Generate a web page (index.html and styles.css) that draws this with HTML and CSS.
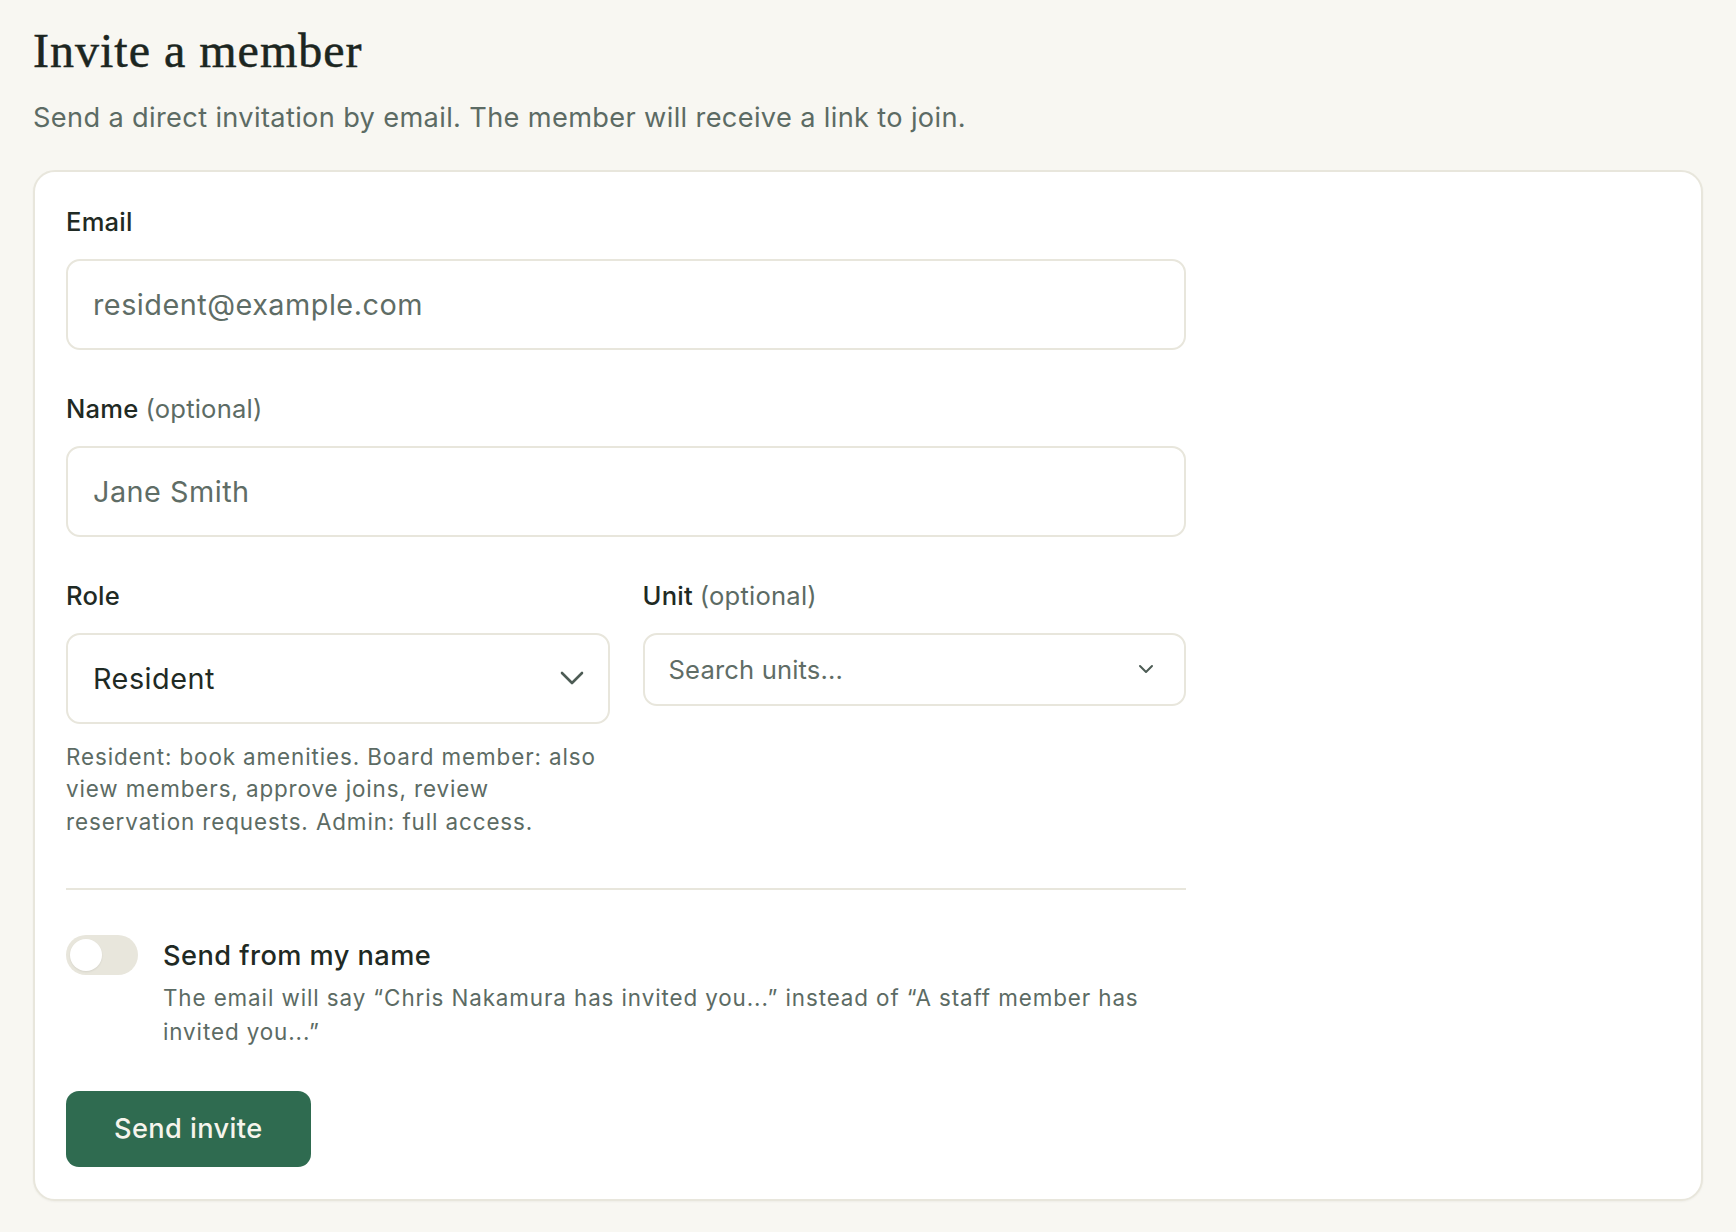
FILE: index.html
```html
<!DOCTYPE html>
<html lang="en">
<head>
<meta charset="utf-8">
<title>Invite a member</title>
<link rel="stylesheet" href="styles.css">
</head>
<body>
<main class="page">
  <h1 class="page-title">Invite a member</h1>
  <p class="page-subtitle">Send a direct invitation by email. The member will receive a link to join.</p>

  <section class="card">
    <form class="invite-form">
      <div class="field">
        <label class="field-label" for="email">Email</label>
        <input class="text-input" id="email" type="email" placeholder="resident@example.com">
      </div>

      <div class="field">
        <label class="field-label" for="name">Name <span class="optional">(optional)</span></label>
        <input class="text-input" id="name" type="text" placeholder="Jane Smith">
      </div>

      <div class="field-row">
        <div class="field">
          <span class="field-label">Role</span>
          <div class="select select-lg">
            <span class="select-value">Resident</span>
            <svg class="chevron chevron-lg" viewBox="0 0 24 14" aria-hidden="true"><path d="M2 2l10 10L22 2"/></svg>
          </div>
          <p class="help-text">Resident: book amenities. Board member: also view members, approve joins, review reservation requests. Admin: full access.</p>
        </div>
        <div class="field">
          <span class="field-label">Unit <span class="optional">(optional)</span></span>
          <div class="select select-sm">
            <span class="select-placeholder">Search units...</span>
            <svg class="chevron chevron-sm" viewBox="0 0 16 10" aria-hidden="true"><path d="M2 2l6 6 6-6"/></svg>
          </div>
        </div>
      </div>

      <div class="toggle-section">
        <div class="toggle-row">
          <span class="switch" role="switch" aria-checked="false"><span class="switch-knob"></span></span>
          <div class="toggle-text">
            <div class="toggle-title">Send from my name</div>
            <p class="toggle-desc">The email will say “Chris Nakamura has invited you...” instead of “A staff member has invited you...”</p>
          </div>
        </div>
      </div>

      <button type="button" class="primary-btn">Send invite</button>
    </form>
  </section>
</main>
</body>
</html>
```

FILE: styles.css
```css
* { box-sizing: border-box; }

html, body {
  margin: 0;
  background: #f8f7f2;
}

body {
  font-family: "Inter", "Noto Sans", sans-serif;
  color: #1f2a24;
}

.page {
  padding: 22px 33px 33px;
}

.page-title {
  margin: 0;
  font-family: "Liberation Serif", "DejaVu Serif", serif;
  font-weight: 400;
  font-size: 48px;
  line-height: 1.2;
  color: #1c2621;
  letter-spacing: 1px;
  -webkit-text-stroke: 0.5px #1c2621;
}

.page-subtitle {
  margin: 16px 0 31px;
  font-size: 27.2px;
  line-height: 1.6;
  letter-spacing: 0.35px;
  color: #5c6b64;
}

.card {
  background: #ffffff;
  border: 2px solid #e8e6dc;
  border-radius: 22px;
  padding: 32px 31px 32px;
  box-shadow: 0 1px 2px rgba(60, 60, 40, 0.05);
}

.invite-form {
  max-width: 1120px;
  display: flex;
  flex-direction: column;
  align-items: flex-start;
}

.field {
  display: flex;
  flex-direction: column;
  width: 100%;
  margin-bottom: 41px;
}

.field-row .field { margin-bottom: 0; }

.field-label {
  font-size: 25.6px;
  line-height: 1.4;
  font-weight: 500;
  letter-spacing: 0.2px;
  color: #1f2a24;
  margin-bottom: 19px;
}

.optional {
  font-weight: 400;
  color: #5c6b64;
}

.text-input {
  width: 100%;
  height: 91px;
  border: 2px solid #e8e6dc;
  border-radius: 14px;
  padding: 0 25px;
  font-family: inherit;
  font-size: 28.8px;
  letter-spacing: 0.5px;
  color: #1f2a24;
  background: #fff;
  outline: none;
}

.text-input::placeholder {
  color: #5f6d66;
  opacity: 1;
}

.field-row {
  width: 100%;
  display: grid;
  grid-template-columns: 1fr 1fr;
  column-gap: 33px;
  align-items: start;
}

.select {
  width: 100%;
  display: flex;
  align-items: center;
  justify-content: space-between;
  border: 2px solid #e8e6dc;
  border-radius: 14px;
  background: #fff;
}

.select-lg {
  height: 91px;
  padding: 0 24px 0 25px;
}

.select-sm {
  height: 73px;
  padding: 0 30px 0 24px;
}

.select-value {
  font-size: 28.8px;
  letter-spacing: 0.5px;
  color: #1f2a24;
}

.select-placeholder {
  font-size: 25.6px;
  letter-spacing: 0.15px;
  color: #5f6d66;
}

.chevron {
  fill: none;
  stroke: #4d5c55;
  stroke-linecap: round;
  stroke-linejoin: round;
}

.chevron-lg {
  width: 24px;
  height: 14px;
  stroke-width: 2.6;
}

.chevron-sm {
  width: 16px;
  height: 10px;
  stroke-width: 2;
}

.help-text {
  margin: 17px 0 0;
  font-size: 22.4px;
  line-height: 1.46;
  letter-spacing: 0.9px;
  color: #5c6b64;
}

.toggle-section {
  width: 100%;
  margin-top: 49px;
  border-top: 2px solid #e8e6dc;
  padding-top: 45px;
}

.toggle-row {
  display: flex;
  align-items: flex-start;
  gap: 25px;
}

.switch {
  flex: none;
  position: relative;
  width: 72px;
  height: 40px;
  border-radius: 20px;
  background: #e8e6dc;
}

.switch-knob {
  position: absolute;
  top: 4px;
  left: 4px;
  width: 32px;
  height: 32px;
  border-radius: 50%;
  background: #ffffff;
  box-shadow: 0 1px 2px rgba(0, 0, 0, 0.08);
}

.toggle-text {
  flex: 1;
  min-width: 0;
}

.toggle-title {
  font-size: 27.2px;
  line-height: 1.55;
  font-weight: 500;
  letter-spacing: 0.45px;
  color: #1f2a24;
}

.toggle-desc {
  margin: 4px 0 0;
  font-size: 22.4px;
  line-height: 1.52;
  letter-spacing: 0.9px;
  color: #5c6b64;
}

.primary-btn {
  margin-top: 42px;
  height: 76px;
  padding: 0 48px;
  border: none;
  border-radius: 13px;
  background: #2f6b50;
  color: #f6f4ec;
  font-family: inherit;
  font-size: 27.2px;
  font-weight: 500;
  letter-spacing: 0.4px;
  cursor: pointer;
}
```
